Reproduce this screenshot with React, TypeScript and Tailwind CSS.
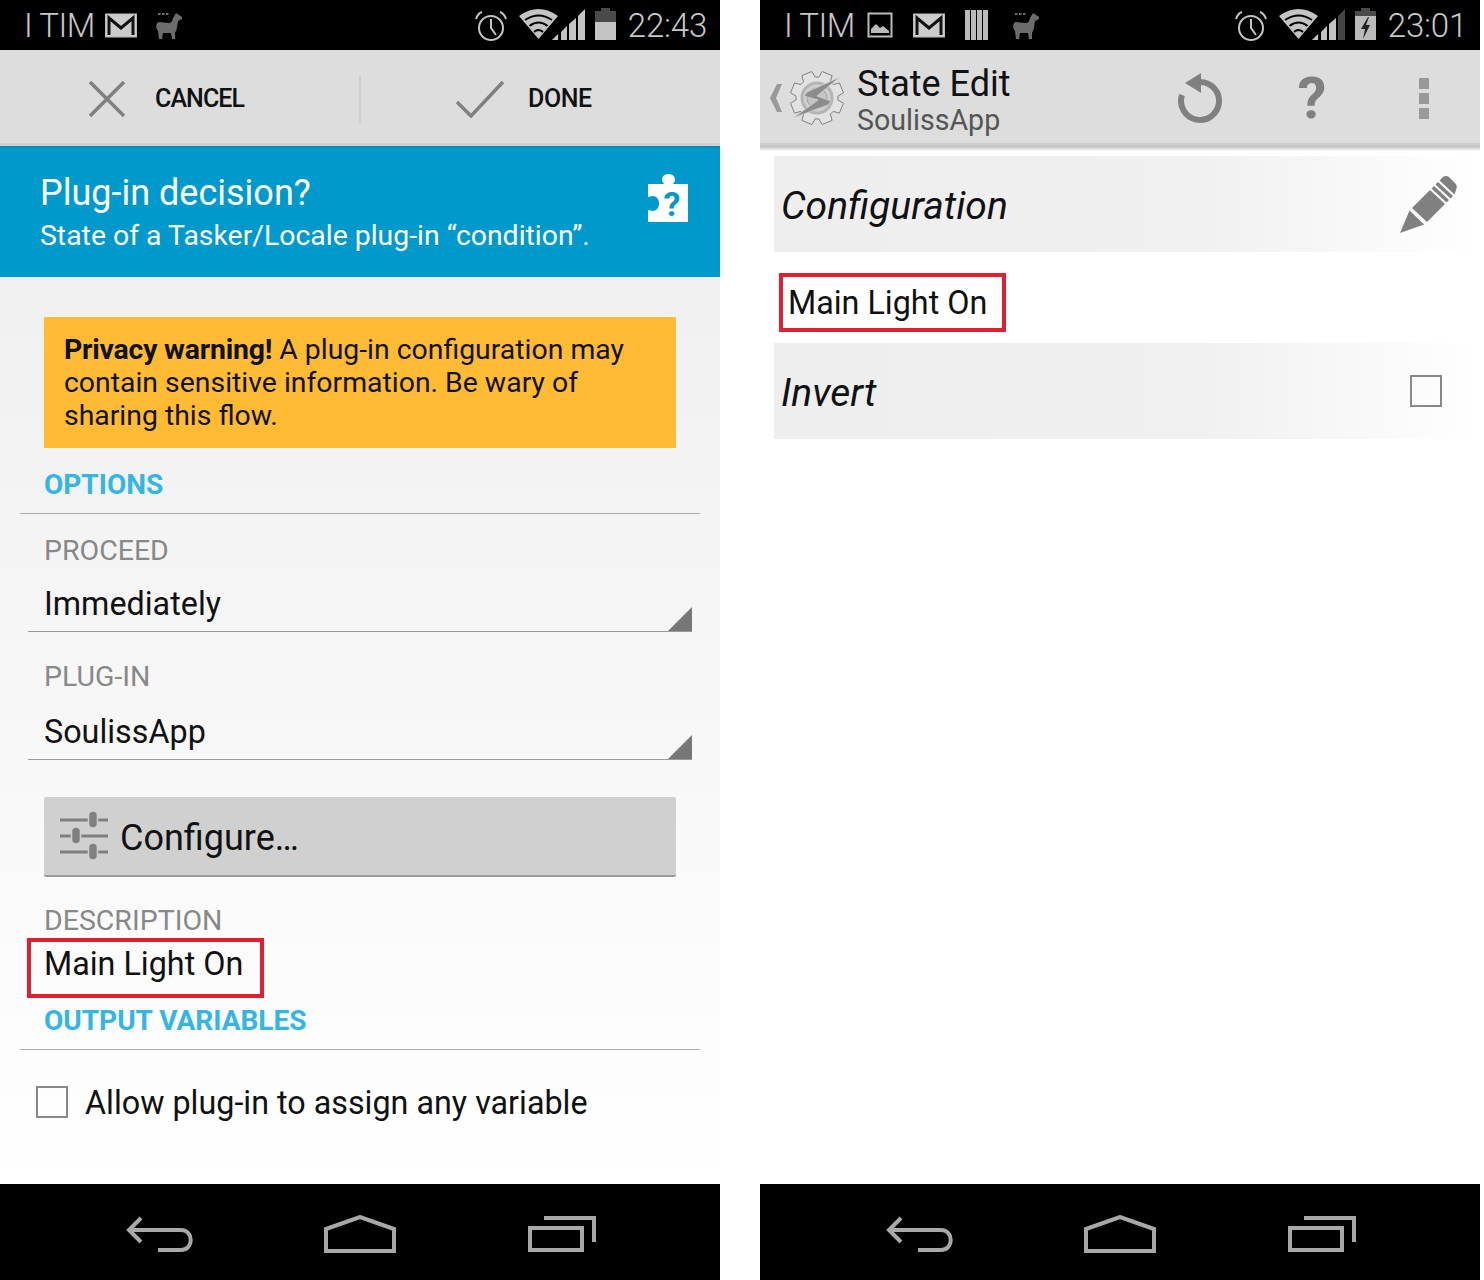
function Llama() {
  return (
    <svg width="28" height="28" viewBox="0 0 28 28" fill="#6c6c6c">
      <path d="M21 1l6 4v2l-4 2c-1 6-1 9-3 12v6h-3l-1-6H8l-1 6H4l-1-8c-3-4-2-8 1-9l9 1c4 0 4-2 5-5z" />
      <rect x="3" y="1" width="2.500" height="2" /><rect x="7" y="1" width="2.500" height="2" /><rect x="11" y="1" width="2.500" height="2" />
    </svg>
  )
}

function Mail() {
  return (
    <svg width="34" height="28" viewBox="0 0 34 28" fill="none">
      <rect x="1.500" y="3" width="31" height="23" fill="#ccc" stroke="#bbb" />
      <path d="M5 24V7l12 10L29 7v17" stroke="#111" strokeWidth="3" />
    </svg>
  )
}

function Picture() {
  return (
    <svg width="26" height="26" viewBox="0 0 26 26" fill="none">
      <rect x="1.500" y="1.500" width="23" height="23" stroke="#bbb" strokeWidth="2" />
      <path d="M4 21v-4l5-5 4 4 3-2 6 5v2z" fill="#bbb" />
    </svg>
  )
}

function Stripes() {
  return (
    <svg width="26" height="30" viewBox="0 0 26 30" fill="#bbb">
      <rect x="1" y="0" width="5" height="30" /><rect x="7" y="0" width="5" height="30" />
      <rect x="13" y="0" width="5" height="30" /><rect x="19" y="0" width="5" height="30" />
    </svg>
  )
}

function StatusRight({ time, charging }: { time: string; charging?: boolean }) {
  return (
    <div className="ml-auto flex items-center">
      {/* alarm */}
      <svg width="34" height="34" viewBox="0 0 34 34" fill="none" stroke="#c4c4c4" strokeWidth="2">
        <circle cx="17" cy="20" r="12" />
        <path d="M17 11v9l5 7" />
        <path d="M2 11c1-3 3-6 6-7M32 11c-1-3-3-6-6-7" />
      </svg>
      {/* wifi + signal */}
      <svg width="66" height="34" viewBox="0 0 66 34" className="ml-[11px]">
        <path d="M0 8Q19.500-6 39 8L19.500 31z" fill="#c4c4c4" />
        <path d="M6 12Q19.500 3 33 12M10.500 18Q19.500 11 28.500 18M15 24Q19.500 20 24 24" stroke="#000" strokeWidth="2" fill="none" />
        <path d="M33 32h6v-6z" fill="#c4c4c4" />
        <path d="M42 32h6V18l-6 6z" fill="#c4c4c4" />
        <path d="M50 32h7V10l-7 6z" fill="#c4c4c4" />
        <path d="M59 32h7V1l-7 7z" fill={charging ? "#444" : "#c4c4c4"} />
      </svg>
      <svg width="21" height="34" viewBox="0 0 21 34" className="ml-[10px]">
        <path d="M6 0h9v3h6v29H0V3h6z" fill="#4a4a4a" />
        {charging ? (
          <>
            <path d="M0 8h21v24H0z" fill="#bbb" />
            <path d="M13 9l-7 12h4l-2 10 7-14h-4l3-8z" fill="#222" />
          </>
        ) : (
          <path d="M0 14h21v18H0z" fill="#c4c4c4" />
        )}
      </svg>
      <span className="ml-[12px] text-[33px] leading-none font-light text-[#c8c8c8] tracking-[-0.2px]">{time}</span>
    </div>
  )
}

function NavBar() {
  return (
    <div className="h-[96px] bg-black flex items-center justify-between pl-[126px] pr-[123px] pt-[3px]">
      <svg width="68" height="36" viewBox="0 0 68 36" fill="none" stroke="#a8a8a8" strokeWidth="4">
        <path d="M15 2L3 14l12 12" />
        <path d="M3 14h52c13 0 13 20 0 20H32" />
      </svg>
      <svg width="72" height="38" viewBox="0 0 72 38" fill="none" stroke="#a8a8a8" strokeWidth="4" className="-translate-x-px">
        <path d="M2 36V14L36 2l34 12v22z" />
      </svg>
      <svg width="70" height="36" viewBox="0 0 70 36" fill="none" stroke="#a8a8a8" strokeWidth="4">
        <rect x="3" y="12" width="52" height="22" />
        <path d="M17 2h50v24" />
      </svg>
    </div>
  )
}

function Spinner({ label, value, gap }: { label: string; value: string; gap: string }) {
  return (
    <div>
      <div className="h-[32px] leading-[32px] pl-[44px] text-[28.5px] text-[#888]">{label}</div>
      <div className={`relative mx-[28px] h-[55px] border-b border-[#999] pl-[16px] text-[32.3px] leading-[54px] text-[#111] ${gap}`}>
        {value}
        <div className="absolute right-0 bottom-0 w-[24px] h-[24px] bg-[#777] [clip-path:polygon(100%_0,100%_100%,0_100%)]" />
      </div>
    </div>
  )
}

function Section({ title }: { title: string }) {
  return (
    <div className="mx-[20px] border-b border-[#aaa] pl-[24px] h-[48px] text-[28px] leading-[38px] font-bold text-[#33b5e5]">
      {title}
    </div>
  )
}

function RedBox({ text, className }: { text: string; className: string }) {
  return (
    <div className={`border-[4px] border-[#e21f2f] text-[32.3px] text-[#111] ${className}`}>
      {text}
    </div>
  )
}

function LeftPhone() {
  return (
    <div className="w-[720px] shrink-0 flex flex-col h-[1280px]">
      <div className="h-[50px] bg-black flex items-center pl-[24px] pr-[13px]">
        <span className="text-[33px] leading-none font-light text-[#c8c8c8] tracking-[-0.5px]">I TIM</span>
        <div className="ml-[9px]"><Mail /></div>
        <div className="ml-[17px] mt-[2px]"><Llama /></div>
        <StatusRight time="22:43" />
      </div>
      <div className="h-[96px] bg-[#dddddd] border-b-[3px] border-[#d0d0d0] flex items-center pt-[4px]">
        <div className="w-[361px] flex items-center pl-[88px] h-[48px] border-r-2 border-[#cfcfcf]">
          <svg width="38" height="38" viewBox="0 0 38 38" stroke="#808080" strokeWidth="3.500"><path d="M2 2l34 34M36 2L2 36" /></svg>
          <span className="ml-[29px] text-[25px] font-medium text-[#111] tracking-[-0.9px]">CANCEL</span>
        </div>
        <div className="flex items-center pl-[95px]">
          <svg width="48" height="38" viewBox="0 0 48 38" fill="none" stroke="#808080" strokeWidth="3.500"><path d="M1 22l14 14L47 2" /></svg>
          <span className="ml-[24px] text-[25px] font-medium text-[#111] tracking-[-0.4px]">DONE</span>
        </div>
      </div>
      <div className="h-[131px] bg-[#0099cc] border-t-2 border-[#0088b8] flex items-start pt-[23px] pl-[40px] pr-[32px] text-white">
        <div>
          <div className="text-[36px] leading-[44px]">Plug-in decision?</div>
          <div className="text-[28.4px] leading-[36px] mt-[3px]">State of a Tasker/Locale plug-in “condition”.</div>
        </div>
        <svg width="40" height="48" viewBox="0 0 40 48" className="ml-auto mt-[3px] overflow-visible">
          <path
            d="M0 10H16C15 8 14 8 14 6 14 2 17 0 20.500 0S27 2 27 6C27 8 26 8 25 10H40V48H0V36C2 36 3 37 5 37 9 37 11 33 11 29.500S9 22 5 22C3 22 2 23 0 23Z"
            fill="#fff"
          />
          <text x="24" y="42" fontSize="34" fontWeight="700" fontFamily="Roboto" textAnchor="middle" fill="#0099cc">?</text>
        </svg>
      </div>
      <div className="flex-1 bg-gradient-to-b from-[#f0f0f0] to-[#ffffff] pt-[40px]">
        <div className="mx-[44px] h-[131px] bg-[#ffbb33] px-[20px] py-[16px] text-[28.4px] leading-[33px] text-[#111]">
          <b className="font-bold tracking-[-0.2px]">Privacy warning!</b> A plug-in configuration may contain sensitive information. Be wary of sharing this flow.
        </div>
        <div className="mt-[18px]"><Section title="OPTIONS" /></div>
        <div className="mt-[21px]"><Spinner label="PROCEED" value="Immediately" gap="mt-[10px]" /></div>
        <div className="mt-[29px]"><Spinner label="PLUG-IN" value="SoulissApp" gap="mt-[12px]" /></div>
        <div className="mx-[44px] mt-[37px] h-[80px] bg-[#d0d0d0] border-b-2 border-[#999] rounded-[2px] flex items-center pl-[16px]">
          <svg width="48" height="50" viewBox="0 0 48 50">
            <path d="M0 9h48M0 25h48M0 41h48" stroke="#808080" strokeWidth="3" />
            <rect x="28.500" y="0" width="9" height="17" rx="4.500" fill="#808080" stroke="#d0d0d0" strokeWidth="1.500" />
            <rect x="11.500" y="16" width="9" height="17" rx="4.500" fill="#808080" stroke="#d0d0d0" strokeWidth="1.500" />
            <rect x="28.500" y="32" width="9" height="17" rx="4.500" fill="#808080" stroke="#d0d0d0" strokeWidth="1.500" />
          </svg>
          <span className="ml-[12px] text-[36px] leading-[44px] pt-[3px] text-[#111]">Configure…</span>
        </div>
        <div className="mt-[28px] h-[32px] leading-[32px] pl-[44px] text-[28.5px] text-[#888]">DESCRIPTION</div>
        <RedBox text="Main Light On" className="ml-[27px] w-[237px] h-[60px] pl-[13px] mt-[1px] leading-[44px]" />
        <div className="mt-[4px]"><Section title="OUTPUT VARIABLES" /></div>
        <div className="mt-[20px] pl-[36px] flex items-center h-[64px]">
          <div className="w-[32px] h-[32px] border-2 border-[#888]" />
          <span className="ml-[17px] pt-[2px] text-[32.3px] text-[#111]">Allow plug-in to assign any variable</span>
        </div>
      </div>
      <NavBar />
    </div>
  )
}

// outline of the 8 tooth gear in the tasker icon
function gearPath(cx: number, cy: number) {
  const pts: string[] = []
  for (let i = 0; i < 8; i++) {
    const a = (i * Math.PI) / 4 - Math.PI / 8
    const corners: [number, number][] = [[-0.3, 21], [-0.2, 27], [0.2, 27], [0.3, 21]]
    corners.forEach(([da, r]) => {
      const x = cx + r * Math.cos(a + da)
      const y = cy + r * Math.sin(a + da)
      pts.push(`${x.toFixed(1)} ${y.toFixed(1)}`)
    })
  }
  return `M${pts.join('L')}z`
}

function TaskerIcon() {
  return (
    <svg width="56" height="56" viewBox="0 0 56 56">
      <path d={gearPath(27, 28)} fill="#e2e2e2" stroke="#808080" strokeWidth="1" />
      <circle cx="27" cy="28" r="15" fill="#cfcfcf" stroke="#b4b4b4" strokeWidth="3" />
      <circle cx="27" cy="28" r="10" fill="#c4c4c4" stroke="#a0a0a0" strokeWidth="1" />
      <path d="M50 7L17 22l-3 4 14 4L3 48l35-13 3-4-14-5z" fill="#8c8c8c" stroke="#d8d8d8" strokeWidth="0.700" />
    </svg>
  )
}

function RightPhone() {
  return (
    <div className="w-[720px] shrink-0 ml-[40px] flex flex-col h-[1280px]">
      <div className="h-[50px] bg-black flex items-center pl-[24px] pr-[13px]">
        <span className="text-[33px] leading-none font-light text-[#c8c8c8] tracking-[-0.5px]">I TIM</span>
        <div className="ml-[12px]"><Picture /></div>
        <div className="ml-[19px]"><Mail /></div>
        <div className="ml-[18px]"><Stripes /></div>
        <div className="ml-[22px] mt-[2px]"><Llama /></div>
        <StatusRight time="23:01" charging />
      </div>
      <div className="h-[96px] bg-[#dddddd] border-b-[3px] border-[#cccccc] flex items-center pt-[3px]">
        <svg width="14" height="28" viewBox="0 0 14 28" fill="#999" className="ml-[9px]"><path d="M8 0h5L7 14l6 14H8L1 14z" /></svg>
        <div className="ml-[7px]"><TaskerIcon /></div>
        <div className="ml-[11px] pt-[4px]">
          <div className="text-[36px] leading-[40px] text-[#111]">State Edit</div>
          <div className="text-[28.6px] leading-[32px] text-[#555]">SoulissApp</div>
        </div>
        <svg width="48" height="54" viewBox="0 0 48 54" fill="none" className="ml-[166px] mt-[4px]">
          <path d="M22 9a19 19 0 1 1-17 13" stroke="#808080" strokeWidth="6" />
          <path d="M24 0v20L8 10z" fill="#808080" />
        </svg>
        <span className="ml-[73px] text-[58px] leading-none font-bold text-[#808080]">?</span>
        <div className="ml-[93px] flex flex-col gap-[4px]">
          <div className="w-[10px] h-[11px] bg-[#999]" />
          <div className="w-[10px] h-[11px] bg-[#999]" />
          <div className="w-[10px] h-[11px] bg-[#999]" />
        </div>
      </div>
      <div className="h-[5px] bg-gradient-to-b from-[#bbbbbb] to-[#ffffff]" />
      <div className="flex-1 bg-white pt-[5px]">
        <div className="ml-[14px] h-[96px] bg-gradient-to-r from-[#eeeeee] via-[#f0f0f0] via-60% to-[#ffffff] flex items-center pl-[7px] pr-[22px]">
          <span className="text-[39px] italic text-[#111] pt-[4px]">Configuration</span>
          <svg width="60" height="60" viewBox="0 0 60 60" className="ml-auto" fill="#808080">
            <path d="M2 59l9.500-22.500L26 50.500z" />
            <path d="M14 34l18-18 15 14-18 18z" />
            <path d="M33.500 14.500L36 12l15 14-2.500 2.500z" />
            <path d="M37.500 10.500L40 8l15 14-2.500 2.500z" />
            <path d="M41.500 6.500L45 3q3-2 6 0l6 6q3 3 1 7l-1.500 4.500z" />
          </svg>
        </div>
        <RedBox text="Main Light On" className="ml-[19px] w-[227px] h-[59px] pl-[5px] mt-[21px] leading-[52px]" />
        <div className="ml-[14px] mt-[11px] h-[96px] bg-gradient-to-r from-[#eeeeee] via-[#f0f0f0] via-60% to-[#ffffff] flex items-center pl-[7px] pr-[38px]">
          <span className="text-[39px] italic text-[#111] pt-[4px]">Invert</span>
          <div className="ml-auto w-[32px] h-[32px] border-2 border-[#888]" />
        </div>
      </div>
      <NavBar />
    </div>
  )
}

export default function App() {
  return (
    <div className="w-[1484px] h-[1280px] bg-white flex overflow-hidden font-['Roboto',sans-serif]">
      <LeftPhone />
      <RightPhone />
    </div>
  )
}
